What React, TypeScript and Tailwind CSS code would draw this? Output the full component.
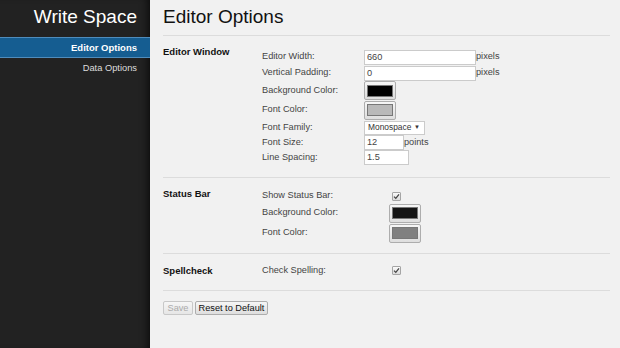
import React from 'react';

const font = { fontFamily: '"Liberation Sans", Arial, sans-serif' };

const TextBox = ({ value, w = 'w-[112px]' }: { value: string; w?: string }) => (
  <div className={`${w} h-[15px] bg-white border border-[#cbcbcb] pl-[2px] text-[9.2px] leading-[13px] text-[#444]`}>
    {value}
  </div>
);

const ColorButton = ({ color }: { color: string }) => (
  <div className="w-[32px] h-[19px] rounded-[2px] border border-[#adadad] bg-gradient-to-b from-[#f6f6f6] to-[#dedede] flex items-center justify-center">
    <div className="w-[26px] h-[12px] border border-[#777]" style={{ background: color }} />
  </div>
);

const Check = () => (
  <div className="ml-[3px] w-[9px] h-[9px] border border-[#a5a5a5] rounded-[1px] bg-gradient-to-b from-[#fafafa] to-[#dcdcdc] flex items-center justify-center">
    <svg width="7" height="7" viewBox="0 0 7 7">
      <path d="M1 3.6 L2.8 5.4 L6 1.4" fill="none" stroke="#444" strokeWidth="1.3" />
    </svg>
  </div>
);

const Row = ({ label, labelW, h, children }: { label: string; labelW: string; h: string; children: React.ReactNode }) => (
  <div className={`flex items-center ${h}`}>
    <div className={`${labelW} text-[9.2px] text-[#444]`}>{label}</div>
    {children}
  </div>
);

const Section = ({ title, children, pad, titleOffset }: { title: string; children: React.ReactNode; pad: string; titleOffset: string }) => (
  <div className={`flex border-b border-[#dcdcdc] ${pad}`}>
    <div className={`w-[99px] text-[9.5px] font-bold text-[#111] leading-[11px] ${titleOffset}`}>{title}</div>
    <div className="flex flex-col">{children}</div>
  </div>
);

export default function App() {
  return (
    <div className="flex w-[620px] h-[348px] overflow-hidden" style={font}>
      <div className="w-[150px] h-full bg-[#222222] shadow-[inset_-8px_0_8px_-6px_rgba(0,0,0,0.7)] flex flex-col">
        <div className="pr-[13px] pt-[4px] h-[37px] text-right text-[19px] text-white leading-[26px]">Write Space</div>
        <div className="h-[21px] bg-[#155d91] border-y border-[#4f8cbc] pr-[13px] text-right text-[9.5px] font-bold text-white leading-[19px]">
          Editor Options
        </div>
        <div className="pr-[13px] pt-[4px] text-right text-[9.3px] text-[#ddd] leading-[13px]">Data Options</div>
      </div>
      <div className="flex-1 bg-[#f1f1f1] pl-[13px] pr-[10px]">
        <div className="h-[36px] border-b border-[#dcdcdc] pt-[4px] text-[19px] text-[#111] leading-[26px]">Editor Options</div>

        <Section title="Editor Window" pad="pt-[13px] pb-[12px]" titleOffset="-mt-[3px]">
          <Row label="Editor Width:" labelW="w-[102px]" h="h-[16px]">
            <TextBox value="660" />
            <span className="text-[9.2px] text-[#444]">pixels</span>
          </Row>
          <Row label="Vertical Padding:" labelW="w-[102px]" h="h-[16px]">
            <TextBox value="0" />
            <span className="text-[9.2px] text-[#444]">pixels</span>
          </Row>
          <Row label="Background Color:" labelW="w-[102px]" h="h-[19px]">
            <ColorButton color="#000" />
          </Row>
          <Row label="Font Color:" labelW="w-[102px]" h="h-[20px]">
            <ColorButton color="#b9b9b9" />
          </Row>
          <Row label="Font Family:" labelW="w-[102px]" h="h-[15px]">
            <div className="w-[61px] h-[14px] bg-white border border-[#cbcbcb] pl-[3px] pr-[4px] flex items-center justify-between text-[8.4px] text-[#333]">
              <span>Monospace</span>
              <span className="text-[6px]">▼</span>
            </div>
          </Row>
          <Row label="Font Size:" labelW="w-[102px]" h="h-[15px]">
            <TextBox value="12" w="w-[40px]" />
            <span className="text-[9.2px] text-[#444]">points</span>
          </Row>
          <Row label="Line Spacing:" labelW="w-[102px]" h="h-[15px]">
            <TextBox value="1.5" w="w-[45px]" />
          </Row>
        </Section>

        <Section title="Status Bar" pad="pt-[11px] pb-[10px]" titleOffset="-mt-[1px]">
          <Row label="Show Status Bar:" labelW="w-[127px]" h="h-[14px]">
            <Check />
          </Row>
          <Row label="Background Color:" labelW="w-[127px]" h="h-[20px]">
            <ColorButton color="#141414" />
          </Row>
          <Row label="Font Color:" labelW="w-[127px]" h="h-[20px]">
            <ColorButton color="#808080" />
          </Row>
        </Section>

        <Section title="Spellcheck" pad="pt-[10px] pb-[13px]" titleOffset="mt-[1px]">
          <Row label="Check Spelling:" labelW="w-[127px]" h="h-[13px]">
            <Check />
          </Row>
        </Section>

        <div className="flex gap-[2px] pt-[10px]">
          <div className="w-[30px] h-[14px] border border-[#c8c8c8] rounded-[2px] bg-gradient-to-b from-[#f6f6f6] to-[#e6e6e6] text-center text-[9.2px] leading-[12px] text-[#aaa]">
            Save
          </div>
          <div className="w-[73px] h-[14px] whitespace-nowrap border border-[#adadad] rounded-[2px] bg-gradient-to-b from-[#f6f6f6] to-[#dedede] text-center text-[9.2px] leading-[12px] text-[#111]">
            Reset to Default
          </div>
        </div>
      </div>
    </div>
  );
}
